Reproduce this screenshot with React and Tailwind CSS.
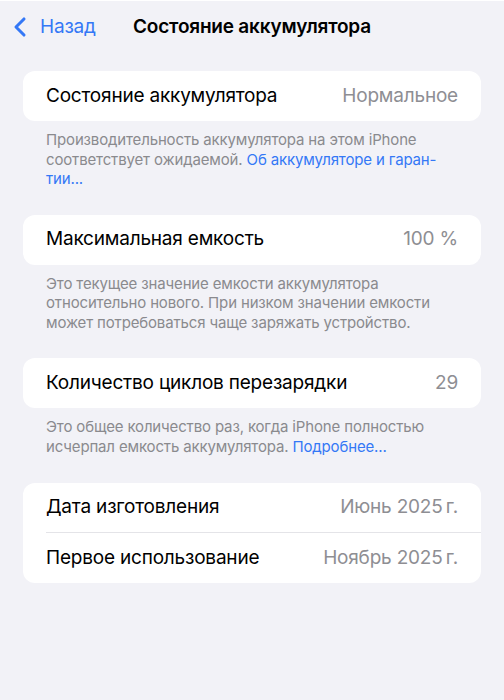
import { ChevronLeft } from 'lucide-react'

const font = { fontFamily: 'Inter, "Noto Sans", sans-serif' }

function Row({ label, value, divider }) {
    return (
        <div className="flex h-[50px] items-center pl-[23px]">
            <div className={`flex h-full flex-1 items-center justify-between pr-[23px] ${divider ? 'border-b border-[#e4e4e8]' : ''}`}>
                <span className="text-[19px] tracking-[-0.2px] text-black">{label}</span>
                <span className="text-[19px] tracking-[-0.2px] text-[#8e8e93]">{value}</span>
            </div>
        </div>
    )
}

function Footer({ children }) {
    return (
        <p className="px-[23px] pt-[9px] text-[15px] leading-[19.5px] tracking-[-0.15px] text-[#8a8a8e]">
            {children}
        </p>
    )
}

const Link = ({ children }) => <span className="text-[#3478f6]">{children}</span>

export default function App() {
    return (
        <div className="min-h-[700px] w-[504px] bg-[#f2f2f7]" style={font}>
            {/* nav bar */}
            <div className="mt-[1px] grid h-[52px] grid-cols-[1fr_auto_1fr] items-center">
                <div className="flex items-center pl-[4px] text-[#3478f6]">
                    <ChevronLeft size={32} strokeWidth={2.3} />
                    <span className="ml-[4px] text-[19px] tracking-[-0.2px]">Назад</span>
                </div>
                <h1 className="text-[19px] font-semibold tracking-[-0.2px] text-black">Состояние аккумулятора</h1>
                <div />
            </div>

            <div className="mt-[18px] px-[23px]">
                <div className="overflow-hidden rounded-[12px] bg-white">
                    <Row label="Состояние аккумулятора" value="Нормальное" />
                </div>
                <Footer>
                    Производительность аккумулятора на этом iPhone соответствует ожидаемой. <Link>Об аккумуляторе и гаран-<br />тии...</Link>
                </Footer>

                <div className="mt-[26px] overflow-hidden rounded-[12px] bg-white">
                    <Row label="Максимальная емкость" value="100 %" />
                </div>
                <Footer>
                    Это текущее значение емкости аккумулятора<br />относительно нового. При низком значении емкости<br />может потребоваться чаще заряжать устройство.
                </Footer>

                <div className="mt-[26px] overflow-hidden rounded-[12px] bg-white">
                    <Row label="Количество циклов перезарядки" value="29" />
                </div>
                <Footer>
                    Это общее количество раз, когда iPhone полностью<br />исчерпал емкость аккумулятора. <Link>Подробнее...</Link>
                </Footer>

                <div className="mt-[27px] overflow-hidden rounded-[12px] bg-white">
                    <Row label="Дата изготовления" value={'Июнь 2025\u2009г.'} divider />
                    <Row label="Первое использование" value={'Ноябрь 2025\u2009г.'} />
                </div>
            </div>
        </div>
    )
}
